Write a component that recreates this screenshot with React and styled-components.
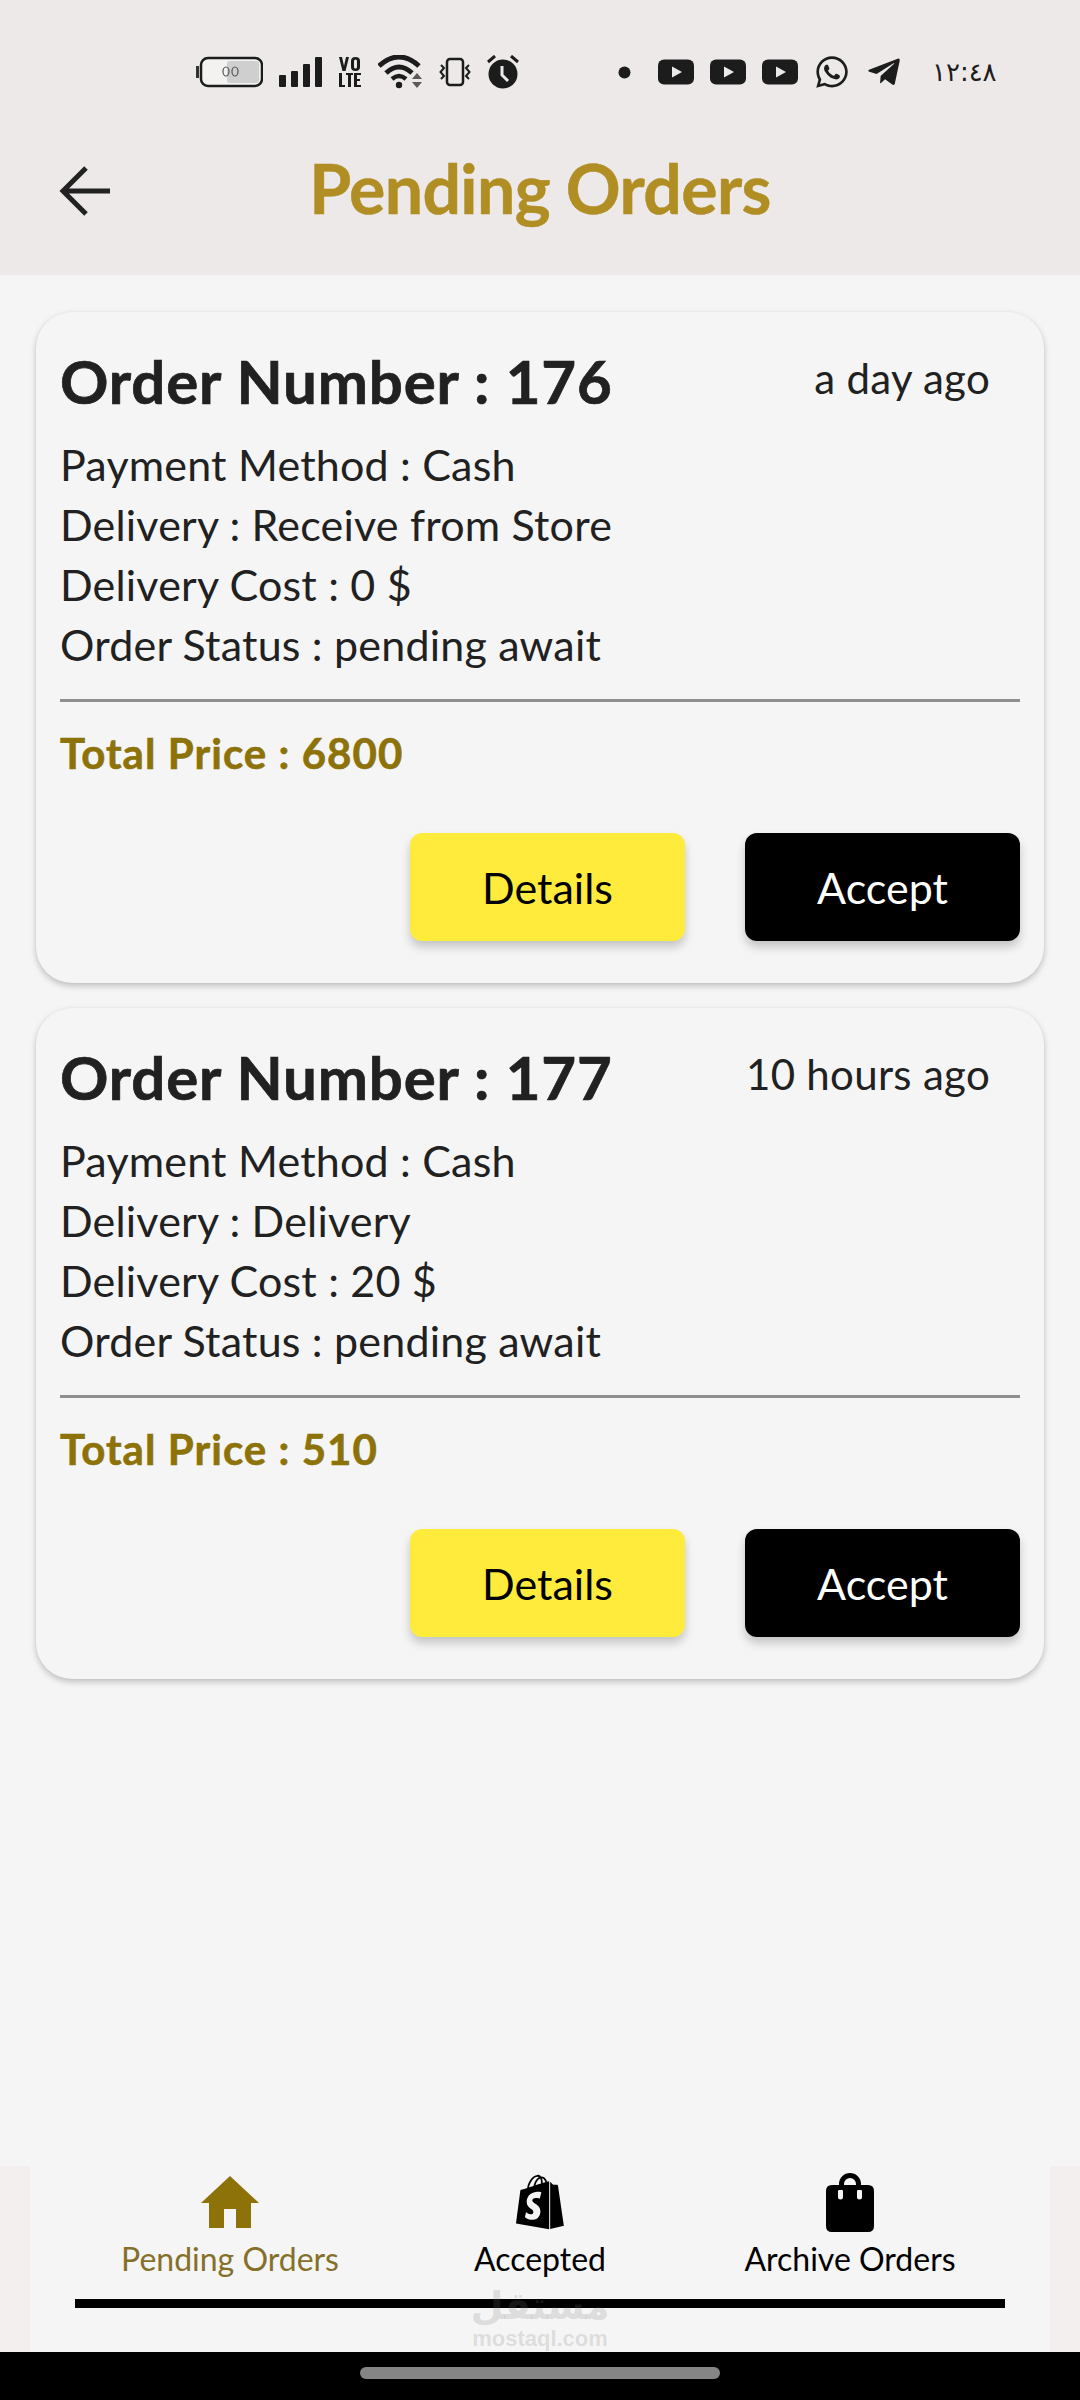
import React from "react";
import styled, { createGlobalStyle } from "styled-components";
import { FaShopify, FaWhatsapp, FaTelegramPlane } from "react-icons/fa";

const Global = createGlobalStyle`
  html, body { margin: 0; padding: 0; background: #f5f5f5; }
  * { box-sizing: border-box; }
  body { font-family: Lato, "Noto Sans", sans-serif; }
`;

const Screen = styled.div`
  width: 1080px;
  height: 2400px;
  display: flex;
  flex-direction: column;
  background: #f5f5f5;
  overflow: hidden;
`;

const Header = styled.header`
  height: 275px;
  flex: none;
  background: #ece9e8;
  display: flex;
  flex-direction: column;
`;

const StatusBar = styled.div`
  height: 130px;
  padding: 50px 0 0 196px;
  display: flex;
  align-items: flex-start;
  color: #1c1c1c;
`;

const StatusGroup = styled.div`
  display: flex;
  align-items: center;
  gap: ${(p) => p.$gap}px;
  margin-left: ${(p) => p.$ml || 0}px;
  height: 44px;
`;

const Clock = styled.span`
  font-family: "DejaVu Sans", sans-serif;
  font-size: 26px;
  margin-left: 30px;
  color: #1c1c1c;
  line-height: 44px;
`;

const TitleRow = styled.div`
  height: 120px;
  position: relative;
  display: flex;
  align-items: center;
  justify-content: center;
  padding-bottom: 4px;
`;

const BackIcon = styled.svg`
  position: absolute;
  left: 58px;
  top: 34px;
  width: 54px;
  height: 54px;
  color: #222;
`;

const Title = styled.h1`
  margin: 0;
  font-size: 68px;
  font-weight: 700;
  letter-spacing: -0.65px;
  -webkit-text-stroke: 0.5px #b08e23;
  color: #b08e23;
  line-height: 1;
`;

const Main = styled.main`
  flex: 1;
  padding: 37px 36px 0;
  display: flex;
  flex-direction: column;
  gap: 25px;
`;

const Card = styled.article`
  height: 671px;
  border-radius: 36px;
  background: #f5f5f5;
  box-shadow: 0 3px 6px rgba(0, 0, 0, 0.22), 0 0 2px rgba(0, 0, 0, 0.06);
  padding: 33px 24px 0;
  display: flex;
  flex-direction: column;
`;

const CardTop = styled.div`
  display: flex;
  justify-content: space-between;
  align-items: center;
  height: 72px;
`;

const OrderNumber = styled.h2`
  margin: 0;
  font-size: 60px;
  font-weight: 700;
  letter-spacing: 0.85px;
  -webkit-text-stroke: 0.7px #212121;
  color: #212121;
  line-height: 1;
`;

const TimeAgo = styled.span`
  font-size: 42px;
  letter-spacing: 0.3px;
  color: #212121;
  margin: 0 30px 6px 0;
`;

const Lines = styled.div`
  margin-top: 18px;
  display: flex;
  flex-direction: column;
`;

const Line = styled.div`
  font-size: 43px;
  letter-spacing: 0.2px;
  line-height: 60px;
  color: #212121;
`;

const Divider = styled.hr`
  margin: 24px 0 0;
  border: 0;
  height: 3px;
  background: #8f8f8f;
`;

const Total = styled.div`
  margin-top: 26px;
  font-size: 42px;
  font-weight: 700;
  letter-spacing: 1.05px;
  -webkit-text-stroke: 0.6px #8c7209;
  line-height: 50px;
  color: #8c7209;
`;

const Actions = styled.div`
  margin-top: 55px;
  display: flex;
  justify-content: flex-end;
  gap: 60px;
`;

const ActionButton = styled.button`
  width: 275px;
  height: 108px;
  border: 0;
  border-radius: 12px;
  font-family: inherit;
  font-size: 43px;
  background: ${(p) => (p.$dark ? "#000" : "#ffeb3b")};
  color: ${(p) => (p.$dark ? "#fff" : "#000")};
  box-shadow: 0 6px 10px rgba(0, 0, 0, 0.2);
`;

const Nav = styled.nav`
  height: 186px;
  flex: none;
  position: relative;
  background: #f5f5f5;
  border-left: 30px solid #f2efee;
  border-right: 30px solid #f2efee;
`;

const NavItems = styled.div`
  display: grid;
  grid-template-columns: 400px 220px 400px;
  padding-top: 3px;
  height: 133px;
  width: 1020px;
`;

const NavItem = styled.div`
  display: flex;
  flex-direction: column;
  align-items: center;
  color: ${(p) => (p.$active ? "#8c7209" : "#000")};
`;

const NavIcon = styled.div`
  height: 66px;
  width: 66px;
  display: flex;
  align-items: center;
  justify-content: center;
`;

const NavLabel = styled.span`
  margin-top: 4px;
  font-size: 32px;
  line-height: 40px;
  color: ${(p) => (p.$active ? "#85702a" : "#000")};
`;

const NavLine = styled.div`
  position: absolute;
  left: 45px;
  width: 930px;
  top: 133px;
  height: 9px;
  background: #000;
`;

const Watermark = styled.div`
  position: absolute;
  left: 0;
  right: 0;
  top: 118px;
  display: flex;
  flex-direction: column;
  align-items: center;
  color: rgba(120, 120, 120, 0.2);
  font-weight: 700;
  line-height: 1;
`;

const WatermarkAr = styled.span`
  font-family: "DejaVu Sans", sans-serif;
  font-size: 38px;
  line-height: 44px;
`;

const WatermarkEn = styled.span`
  font-family: "Liberation Sans", sans-serif;
  font-size: 22px;
  line-height: 22px;
`;

const SystemBar = styled.div`
  height: 48px;
  flex: none;
  background: #000;
  display: flex;
  justify-content: center;
  padding-top: 15px;
`;

const HomePill = styled.div`
  width: 360px;
  height: 12px;
  border-radius: 6px;
  background: #858585;
`;

const YoutubeIcon = () => (
  <svg width="36" height="26" viewBox="0 0 36 26">
    <rect width="36" height="25" y="0.5" rx="6" fill="currentColor" />
    <path d="M14 7.5 L24 13 L14 18.5Z" fill="#ece9e8" />
  </svg>
);

const StatusIcons = () => (
  <>
    <StatusGroup $gap={15.6}>
      <svg width="67" height="32" viewBox="0 0 67 32">
        <rect x="0" y="10" width="3" height="12" fill="#333" />
        <rect x="5" y="2" width="61" height="28" rx="7" fill="#f4f2f1" stroke="#1c1c1c" strokeWidth="2.5" />
        <rect x="31" y="5" width="32" height="22" rx="3" fill="#cfcfcf" />
        <ellipse cx="30" cy="15.5" rx="3" ry="4.5" fill="none" stroke="#555" strokeWidth="1.2" />
        <ellipse cx="39" cy="15.5" rx="3" ry="4.5" fill="none" stroke="#555" strokeWidth="1.2" />
      </svg>
      <svg width="44" height="32" viewBox="0 0 44 32">
        <rect x="0" y="19" width="7" height="12" rx="1" fill="currentColor" />
        <rect x="12" y="15" width="7" height="16" rx="1" fill="currentColor" />
        <rect x="24" y="8" width="7" height="23" rx="1" fill="currentColor" />
        <rect x="36" y="1" width="7" height="30" rx="1" fill="currentColor" />
      </svg>
      <svg width="24" height="32" viewBox="0 0 24 32">
        <path d="M1 1 L4 1 L6 10 L8 1 L11 1 L7.5 15 L4.5 15Z M13 5 Q13 1 17.500 1 Q22 1 22 5 L22 11 Q22 15 17.500 15 Q13 15 13 11Z M16 5 L16 11 Q16 12.500 17.500 12.500 Q19 12.500 19 11 L19 5 Q19 3.500 17.500 3.500 Q16 3.500 16 5Z" fill="currentColor" fillRule="evenodd" />
        <path d="M1 17 L4 17 L4 29 L7 29 L7 31 L1 31Z M8 17 L15 17 L15 19 L13 19 L13 31 L10 31 L10 19 L8 19Z M16 17 L23 17 L23 19 L19 19 L19 23 L22 23 L22 25 L19 25 L19 29 L23 29 L23 31 L16 31Z" fill="currentColor" />
      </svg>
      <svg width="46" height="34" viewBox="0 0 46 34">
        <path d="M1 11 Q21 -7 41 11" fill="none" stroke="currentColor" strokeWidth="5" />
        <path d="M8 18 Q21 6 34 18" fill="none" stroke="currentColor" strokeWidth="5" />
        <path d="M14 24 Q21 18 28 24" fill="none" stroke="currentColor" strokeWidth="4.500" />
        <circle cx="21" cy="30" r="3.200" fill="currentColor" />
        <path d="M34 24 L39 18 L44 24Z M34 27 L44 27 L39 33Z" fill="#5a5a5a" />
      </svg>
      <svg width="32" height="30" viewBox="0 0 32 30">
        <rect x="8" y="2" width="16" height="26" rx="3" fill="none" stroke="currentColor" strokeWidth="2.500" />
        <path d="M2 8 L5 11 L1.500 15 L5 19 L2 22 M30 8 L27 11 L30.500 15 L27 19 L30 22" fill="none" stroke="currentColor" strokeWidth="2" />
      </svg>
      <svg width="32" height="34" viewBox="0 0 32 34">
        <circle cx="16" cy="19" r="14.500" fill="currentColor" />
        <path d="M15 11 L15 20 L21 26" fill="none" stroke="#ece9e8" strokeWidth="3" />
        <path d="M1 7 L8 1 M31 7 L24 1" stroke="currentColor" strokeWidth="3" />
      </svg>
    </StatusGroup>
    <StatusGroup $gap={16} $ml={99}>
      <svg width="13" height="13" viewBox="0 0 13 13">
        <circle cx="6.500" cy="6.500" r="6" fill="currentColor" />
      </svg>
      <StatusGroup $gap={16} $ml={11}>
        <YoutubeIcon />
        <YoutubeIcon />
        <YoutubeIcon />
      </StatusGroup>
      <FaWhatsapp size={36} />
      <FaTelegramPlane size={36} />
    </StatusGroup>
    <Clock>١٢:٤٨</Clock>
  </>
);

const orders = [
  { id: 176, ago: "a day ago", delivery: "Receive from Store", cost: 0, total: 6800 },
  { id: 177, ago: "10 hours ago", delivery: "Delivery", cost: 20, total: 510 },
];

export default function App() {
  return (
    <Screen>
      <Global />
      <Header>
        <StatusBar>
          <StatusIcons />
        </StatusBar>
        <TitleRow>
          <BackIcon viewBox="0 0 54 54" fill="none">
            <path d="M6 27 H52 M28 4 L5 27 L28 50" stroke="currentColor" strokeWidth="5" />
          </BackIcon>
          <Title>Pending Orders</Title>
        </TitleRow>
      </Header>
      <Main>
        {orders.map((o) => (
          <Card key={o.id}>
            <CardTop>
              <OrderNumber>Order Number : {o.id}</OrderNumber>
              <TimeAgo>{o.ago}</TimeAgo>
            </CardTop>
            <Lines>
              <Line>Payment Method : Cash</Line>
              <Line>Delivery : {o.delivery}</Line>
              <Line>Delivery Cost : {o.cost} $</Line>
              <Line>Order Status : pending await</Line>
            </Lines>
            <Divider />
            <Total>Total Price : {o.total}</Total>
            <Actions>
              <ActionButton>Details</ActionButton>
              <ActionButton $dark>Accept</ActionButton>
            </Actions>
          </Card>
        ))}
      </Main>
      <Nav>
        <NavItems>
          <NavItem $active>
            <NavIcon>
              <svg width="58" height="52" viewBox="0 0 58 52">
                <path d="M29 0 L58 27 L50 27 L50 52 L35 52 L35 33 L23 33 L23 52 L8 52 L8 27 L0 27Z" fill="currentColor" />
              </svg>
            </NavIcon>
            <NavLabel $active>Pending Orders</NavLabel>
          </NavItem>
          <NavItem>
            <NavIcon>
              <FaShopify size={56} />
            </NavIcon>
            <NavLabel>Accepted</NavLabel>
          </NavItem>
          <NavItem>
            <NavIcon>
              <svg width="48" height="60" viewBox="0 0 48 60">
                <path d="M13 13 V12 A11 11 0 0 1 35 12 V13 H42 Q48 13 48 19 V54 Q48 60 42 60 H6 Q0 60 0 54 V19 Q0 13 6 13Z M18 13 H30 V12 A6 6 0 0 0 18 12Z M12 19 Q12 18 13 18 H16 Q17 18 17 19 V25 A2.500 2.500 0 0 1 12 25Z M31 19 Q31 18 32 18 H35 Q36 18 36 19 V25 A2.500 2.500 0 0 1 31 25Z" fill="currentColor" fillRule="evenodd" />
              </svg>
            </NavIcon>
            <NavLabel>Archive Orders</NavLabel>
          </NavItem>
        </NavItems>
        <NavLine />
        <Watermark>
          <WatermarkAr>مستقل</WatermarkAr>
          <WatermarkEn>mostaql.com</WatermarkEn>
        </Watermark>
      </Nav>
      <SystemBar>
        <HomePill />
      </SystemBar>
    </Screen>
  );
}
